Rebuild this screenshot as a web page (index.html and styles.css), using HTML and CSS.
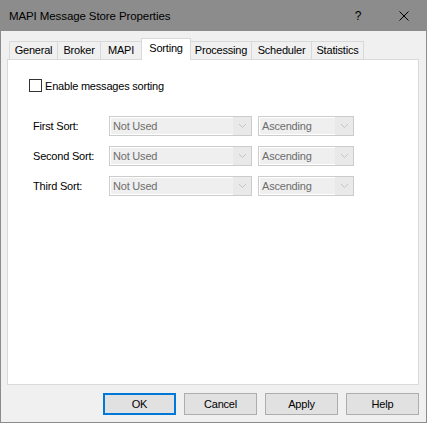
FILE: index.html
```html
<!DOCTYPE html>
<html>
<head>
<meta charset="utf-8">
<link rel="stylesheet" href="styles.css">
</head>
<body>
<div class="window">
  <div class="titlebar">
    <span class="title">MAPI Message Store Properties</span>
    <span class="help">?</span>
    <span class="close"><svg width="10" height="10" viewBox="0 0 10 10"><path d="M0.5 0.5 L9.5 9.5 M9.5 0.5 L0.5 9.5" stroke="#000" stroke-width="1" fill="none"/></svg></span>
  </div>
  <div class="client">
    <div class="tabs">
      <div class="tab t1">General</div>
      <div class="tab t2">Broker</div>
      <div class="tab t3">MAPI</div>
      <div class="tab t4 selected">Sorting</div>
      <div class="tab t5">Processing</div>
      <div class="tab t6">Scheduler</div>
      <div class="tab t7">Statistics</div>
    </div>
    <div class="panel">
      <label class="check"><span class="box"></span><span>Enable messages sorting</span></label>
      <div class="rows">
        <div class="row">
          <span class="lbl">First Sort:</span>
          <div class="combo wide"><span class="field">Not Used</span><span class="arrow"><svg width="7" height="4" viewBox="0 0 7 4"><path d="M0 0 L3.5 3.5 L7 0" stroke="#c4c4c4" fill="none"/></svg></span></div>
          <div class="combo narrow"><span class="field">Ascending</span><span class="arrow"><svg width="7" height="4" viewBox="0 0 7 4"><path d="M0 0 L3.5 3.5 L7 0" stroke="#c4c4c4" fill="none"/></svg></span></div>
        </div>
        <div class="row">
          <span class="lbl">Second Sort:</span>
          <div class="combo wide"><span class="field">Not Used</span><span class="arrow"><svg width="7" height="4" viewBox="0 0 7 4"><path d="M0 0 L3.5 3.5 L7 0" stroke="#c4c4c4" fill="none"/></svg></span></div>
          <div class="combo narrow"><span class="field">Ascending</span><span class="arrow"><svg width="7" height="4" viewBox="0 0 7 4"><path d="M0 0 L3.5 3.5 L7 0" stroke="#c4c4c4" fill="none"/></svg></span></div>
        </div>
        <div class="row">
          <span class="lbl">Third Sort:</span>
          <div class="combo wide"><span class="field">Not Used</span><span class="arrow"><svg width="7" height="4" viewBox="0 0 7 4"><path d="M0 0 L3.5 3.5 L7 0" stroke="#c4c4c4" fill="none"/></svg></span></div>
          <div class="combo narrow"><span class="field">Ascending</span><span class="arrow"><svg width="7" height="4" viewBox="0 0 7 4"><path d="M0 0 L3.5 3.5 L7 0" stroke="#c4c4c4" fill="none"/></svg></span></div>
        </div>
      </div>
    </div>
    <div class="buttons">
      <button class="btn default">OK</button>
      <button class="btn">Cancel</button>
      <button class="btn">Apply</button>
      <button class="btn">Help</button>
    </div>
  </div>
</div>
</body>
</html>
```

FILE: styles.css
```css
* { box-sizing: border-box; }
html, body { margin: 0; padding: 0; background: #f0f0f0; }
body {
  font-family: "Liberation Sans", Arial, sans-serif;
  font-size: 11px;
  letter-spacing: -0.2px;
  color: #000;
}
.window {
  width: 427px;
  height: 423px;
  display: flex;
  flex-direction: column;
}
.titlebar {
  height: 31px;
  flex: none;
  background: #8c8c8c;
  display: flex;
  align-items: center;
  padding-left: 9px;
}
.title {
  font-size: 11.5px;
  letter-spacing: -0.1px;
  color: #000;
  flex: 1;
}
.help {
  font-size: 12px;
  width: 46px;
  text-align: center;
  margin-right: 0;
}
.close {
  width: 46px;
  height: 31px;
  display: flex;
  align-items: center;
  justify-content: center;
}
.client {
  flex: 1;
  border: 1px solid #8c8c8c;
  border-top: none;
  background: #f0f0f0;
  display: flex;
  flex-direction: column;
}
.tabs {
  display: flex;
  align-items: flex-end;
  height: 21px;
  margin-top: 7px;
  padding-left: 8px;
}
.tab {
  height: 18px;
  border: 1px solid #d9d9d9;
  border-bottom: none;
  background: #f0f0f0;
  display: flex;
  align-items: center;
  justify-content: center;
  margin-left: -1px;
  padding-bottom: 1px;
}
.tab.t1 { margin-left: 0; width: 49px; }
.tab.t2 { width: 44px; }
.tab.t3 { width: 42px; }
.tab.t4 { width: 50px; }
.tab.t5 { width: 62px; }
.tab.t6 { width: 61px; }
.tab.t7 { width: 53px; }
.tab.selected {
  height: 22px;
  margin-bottom: -1px;
  background: #fff;
  position: relative;
  z-index: 1;
  padding-bottom: 3px;
}
.panel {
  height: 326px;
  margin: 0 7px 0 6px;
  background: #fff;
  border: 1px solid #d9d9d9;
  display: flex;
  flex-direction: column;
}
.check {
  display: flex;
  align-items: center;
  margin: 19px 0 0 21px;
  height: 13px;
}
.box {
  width: 13px;
  height: 13px;
  border: 1px solid #333;
  background: #fff;
  margin-right: 3px;
}
.rows {
  display: flex;
  flex-direction: column;
  gap: 10px;
  margin-top: 24px;
  padding-left: 25px;
}
.row {
  display: flex;
  align-items: center;
  height: 20px;
}
.lbl {
  width: 76px;
}
.combo {
  height: 20px;
  border: 1px solid #cccccc;
  background: #efefef;
  display: flex;
  color: #6d6d6d;
}
.combo.wide { width: 143px; }
.combo.narrow { width: 96px; margin-left: 6px; }
.field {
  flex: 1;
  border: 1px solid #fff;
  border-right: none;
  padding-left: 2px;
  display: flex;
  align-items: center;
}
.arrow {
  width: 18px;
  display: flex;
  align-items: center;
  justify-content: center;
  background: #e9e9e9;
}
.buttons {
  display: flex;
  justify-content: flex-end;
  gap: 8px;
  margin-top: 8px;
  padding-right: 7px;
}
.btn {
  width: 73px;
  height: 22px;
  background: #e1e1e1;
  border: 1px solid #adadad;
  font-family: "Liberation Sans", Arial, sans-serif;
  font-size: 11px;
  letter-spacing: -0.2px;
  color: #000;
  padding: 0;
}
.btn.default {
  border: 2px solid #0078d7;
}
```
